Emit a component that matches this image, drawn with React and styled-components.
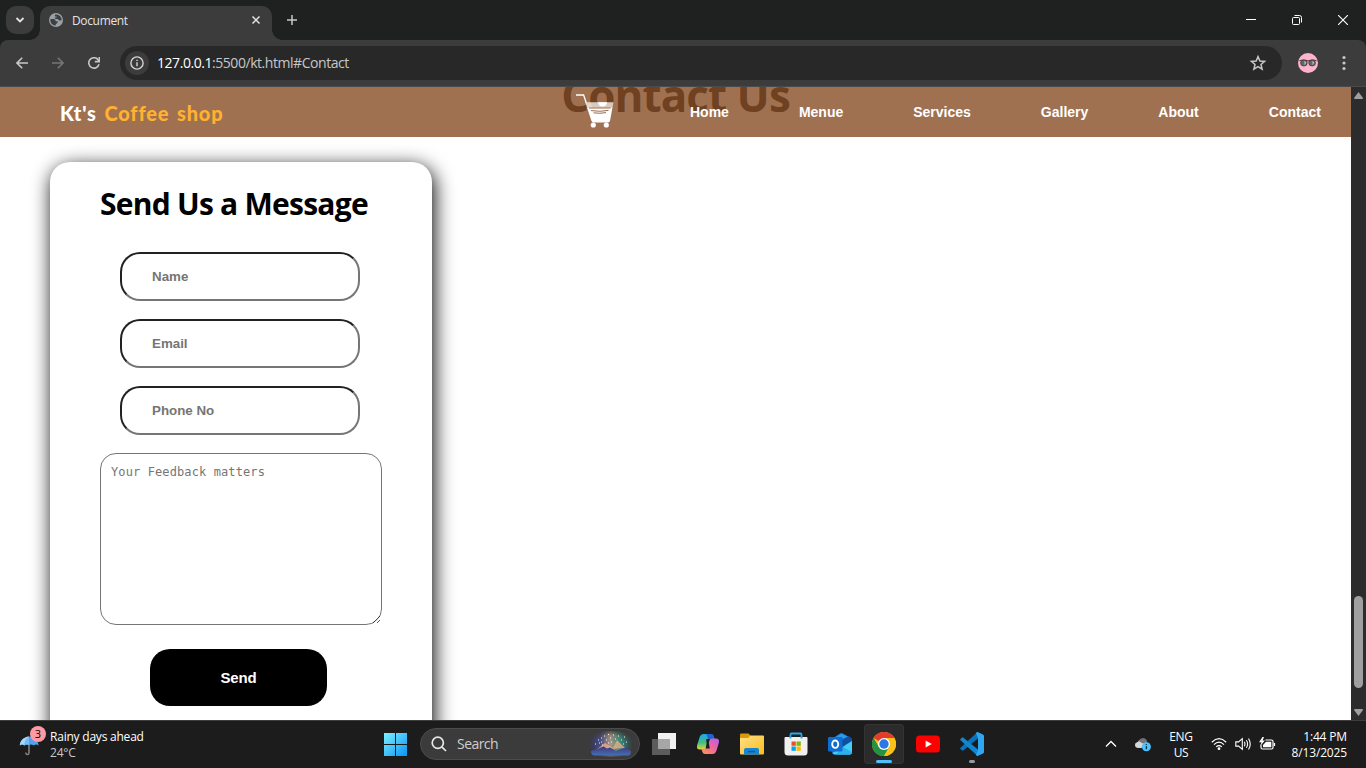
import React from "react";
import styled, { createGlobalStyle } from "styled-components";

const Global = createGlobalStyle`
  *, *::before, *::after { box-sizing: border-box; }
  body { margin: 0; overflow: hidden; background: #1c1c1c; }
  svg { display: block; flex: none; }
`;

const UI = `"Segoe UI", "Open Sans", "Noto Sans", sans-serif`;

const Screen = styled.div`
  width: 1366px;
  height: 768px;
  display: flex;
  flex-direction: column;
  overflow: hidden;
  font-family: ${UI};
`;

/* ---------- browser chrome ---------- */
const TabStrip = styled.div`
  height: 40px;
  flex: none;
  display: flex;
  background: #1f2120;
  color: #e3e3e3;
`;
const TabSearch = styled.div`
  width: 28px;
  height: 28px;
  margin: 6px 6px 0;
  border-radius: 10px;
  background: #3c3c3c;
  display: grid;
  place-items: center;
`;
const Tab = styled.div`
  position: relative;
  width: 232px;
  height: 34px;
  margin-top: 6px;
  padding: 0 11px 6px 9px;
  display: flex;
  align-items: center;
  border-radius: 10px 10px 0 0;
  background: #3c3c3c;
  &::before, &::after {
    content: "";
    position: absolute;
    bottom: 0;
    width: 10px;
    height: 10px;
  }
  &::before { left: -10px; background: radial-gradient(circle at 0 0, transparent 9.5px, #3c3c3c 10px); }
  &::after { right: -10px; background: radial-gradient(circle at 100% 0, transparent 9.5px, #3c3c3c 10px); }
`;
const TabTitle = styled.span`
  flex: 1;
  margin-left: 9px;
  padding-top: 1px;
  font-size: 12px;
  line-height: 16px;
  letter-spacing: -0.35px;
`;
const NewTab = styled.div`
  width: 40px;
  display: grid;
  place-items: center;
`;
const WindowButtons = styled.div`
  margin-left: auto;
  display: flex;
`;
const WindowButton = styled.div`
  width: 46px;
  height: 40px;
  display: grid;
  place-items: center;
`;
const ToolbarBack = styled.div`
  flex: none;
  background: #1f2120;
`;
const Toolbar = styled.div`
  height: 47px;
  display: flex;
  align-items: center;
  padding: 0 10px 1px 10px;
  background: #3c3c3c;
  border-bottom: 1px solid #4a4a4a;
  border-radius: 8px 8px 0 0;
`;
const ToolButton = styled.div`
  width: ${(p) => p.$w || 36}px;
  height: 36px;
  display: grid;
  place-items: center;
`;
const AddressBar = styled.div`
  width: 1162px;
  height: 34px;
  margin-left: 2px;
  padding: 0 15px 0 5px;
  display: flex;
  align-items: center;
  border-radius: 17px;
  background: #282828;
`;
const InfoBadge = styled.div`
  width: 24px;
  height: 24px;
  border-radius: 50%;
  background: #3c3c3c;
  display: grid;
  place-items: center;
`;
const Url = styled.span`
  flex: 1;
  margin-left: 8px;
  font-size: 14px;
  line-height: 20px;
  letter-spacing: -0.45px;
  color: #c7c7c7;
  b { font-weight: 400; color: #fff; }
`;

/* ---------- web page ---------- */
const Viewport = styled.div`
  height: 633px;
  flex: none;
  display: flex;
  background: #fff;
`;
const Page = styled.main`
  position: relative;
  width: 1351px;
  height: 633px;
  overflow: hidden;
`;
const PageHeader = styled.header`
  position: absolute;
  inset: 0 0 auto 0;
  height: 50px;
  padding: 0 30px 0 60px;
  display: flex;
  align-items: center;
  background: rgba(137, 80, 41, 0.81);
  color: #fff;
`;
const Brand = styled.div`
  width: 515px;
  padding-top: 2px;
  font: 900 20px/30px "Comic Sans MS", Lato, sans-serif;
  letter-spacing: 0.8px;
  word-spacing: 2.3px;
  white-space: pre;
  span { color: #ffb130; }
`;
const Nav = styled.nav`
  margin-left: 75px;
  display: flex;
  gap: 70px;
  font: 700 14px/18px Arial, "Liberation Sans", sans-serif;
  a { color: #fff; }
`;
const SectionTitle = styled.h1`
  display: flow-root;
  height: 75px;
  margin: 0;
  text-align: center;
  font-size: 44px;
  line-height: 60px;
  font-weight: 700;
  letter-spacing: -0.95px;
  color: #000;
  span { display: block; margin-top: -22px; height: 60px; }
`;
const FormCard = styled.form`
  width: 382px;
  height: 640px;
  margin-left: 50px;
  padding: 20px 50px;
  display: flex;
  flex-direction: column;
  border-radius: 20px;
  background: #fff;
  box-shadow: 2px 5px 20px #000;
`;
const FormTitle = styled.h2`
  height: 44px;
  margin: 0 0 26px;
  font-size: 30px;
  line-height: 44px;
  font-weight: 700;
  letter-spacing: -0.75px;
  white-space: nowrap;
  color: #000;
`;
const Field = styled.input`
  width: 240px;
  height: 49px;
  margin: 0 0 18px 20px;
  padding: 0 30px;
  border: 2px inset rgb(118, 118, 118);
  border-radius: 20px;
  background: #fff;
  font: 700 13.33px Arial, "Liberation Sans", sans-serif;
  &::placeholder { color: #757575; }
`;
const Feedback = styled.textarea`
  width: 282px;
  height: 172px;
  flex: none;
  padding: 10px;
  border: 1px solid #767676;
  border-radius: 16px;
  background: #fff;
  font: 12px/16px Consolas, "DejaVu Sans Mono", monospace;
  letter-spacing: 0.11px;
  &::placeholder { color: #757575; }
`;
const SendButton = styled.button`
  width: 177px;
  height: 57px;
  margin: 24px 0 0 50px;
  border: 0;
  border-radius: 20px;
  background: #000;
  color: #fff;
  font: 700 15px Arial, "Liberation Sans", sans-serif;
  letter-spacing: -0.2px;
`;
const ScrollBar = styled.div`
  width: 15px;
  display: flex;
  flex-direction: column;
  align-items: center;
  padding: 5px 0 4px;
  background: #2c2c2c;
`;
const Thumb = styled.div`
  width: 9px;
  height: 92px;
  flex: none;
  margin: 497px 0 21px;
  border-radius: 5px;
  background: #9f9f9f;
`;

/* ---------- taskbar ---------- */
const Taskbar = styled.div`
  height: 48px;
  flex: none;
  display: flex;
  align-items: center;
  box-shadow: inset 0 1px #3d3d3d;
  background: #1c1c1c;
  color: #fff;
  font-size: 12px;
  line-height: 16px;
`;
const Weather = styled.div`
  width: 373px;
  padding-left: 19px;
  display: flex;
  align-items: center;
`;
const WeatherIcon = styled.div`
  position: relative;
  width: 31px;
  height: 32px;
  padding-top: 8px;
`;
const Count = styled.span`
  position: absolute;
  left: 11px;
  top: -2px;
  width: 16px;
  height: 16px;
  border-radius: 50%;
  background: #ff99a4;
  color: #000;
  font-size: 11px;
  line-height: 16px;
  text-align: center;
`;
const Lines = styled.div`
  width: ${(p) => (p.$w ? p.$w + "px" : "auto")};
  padding-top: 1px;
  text-align: ${(p) => p.$align || "left"};
  letter-spacing: ${(p) => p.$ls || 0}px;
  white-space: nowrap;
  small { display: block; font-size: 12px; color: ${(p) => p.$sub || "#fff"}; }
`;
const AppTile = styled.div`
  position: relative;
  width: 40px;
  height: 40px;
  margin: 0 2px;
  border-radius: 4px;
  display: grid;
  place-items: center;
  background: ${(p) => (p.$active ? "#2b2b2b" : "none")};
  box-shadow: ${(p) => (p.$active ? "inset 0 0 0 1px #343434" : "none")};
  &::after {
    content: "";
    display: ${(p) => (p.$run ? "block" : "none")};
    position: absolute;
    bottom: 1px;
    left: ${(p) => 20 - p.$run / 2}px;
    width: ${(p) => p.$run}px;
    height: 3px;
    border-radius: 2px;
    background: ${(p) => (p.$active ? "#4cc2ff" : "#9a9a9a")};
  }
`;
const Search = styled.div`
  width: 220px;
  height: 32px;
  margin: 0 2px 0 3px;
  padding: 0 7px 0 10px;
  display: flex;
  align-items: center;
  border: 1px solid #4c4c4c;
  border-radius: 16px;
  background: #3b3b3b;
  color: #cfcfcf;
  font-size: 14px;
  letter-spacing: -0.55px;
  span { flex: 1; margin-left: 10px; }
`;
const Tray = styled.div`
  margin-left: auto;
  padding-right: 19px;
  display: flex;
  align-items: center;
`;
const TraySlot = styled.div`
  width: ${(p) => p.$w}px;
  display: grid;
  place-items: center;
`;

/* ---------- icons ---------- */
const Line = ({ w = 16, h = w, vb, color = "#e3e3e3", sw = 1.6, children }) => (
  <svg width={w} height={h} viewBox={vb || `0 0 ${w} ${h}`} fill="none" stroke={color} strokeWidth={sw}>
    {children}
  </svg>
);

const Globe = () => (
  <svg width="14" height="14" viewBox="0 0 14 14">
    <circle cx="7" cy="7" r="7" fill="#9aa0a6" />
    <path d="M1.500 6 H4.600 Q6.800 6.200 6.800 8.200 H8.600 V9.600 Q8.400 10.800 6.800 10.800 V12.500 Q2.200 12.300 1.400 8Z" fill="#3c4043" />
    <path d="M6.300 1.500 Q10.500 1 12.300 5 Q13 7 12.200 7.500 H10.600 Q9.200 7.300 9 6 H6.500 Q5.600 5.500 5.700 4.600 H7.600 V3.400 H5.900 Q5.600 2 6.300 1.500Z" fill="#3c4043" />
  </svg>
);

const Avatar = () => (
  <svg width="20" height="20" viewBox="0 0 20 20">
    <circle cx="10" cy="10" r="10" fill="#ffb3cc" />
    <path d="M1.500 7.800 Q5.500 6 10 8 Q14.500 6 18.500 7.800" fill="none" stroke="#5d3440" strokeWidth="1.100" />
    <ellipse cx="5.900" cy="10" rx="3.300" ry="3" fill="#5b6b6b" stroke="#49363c" strokeWidth=".8" />
    <ellipse cx="14.100" cy="10" rx="3.300" ry="3" fill="#5b6b6b" stroke="#49363c" strokeWidth=".8" />
    <path d="M6.500 7.800 L8.300 9.600 L6.500 12.300 Z M14.500 7.800 L16.300 9.600 L14.500 12.300 Z" fill="#b4c8c8" />
  </svg>
);

const Cart = () => (
  <svg width="40" height="37" viewBox="0 0 40 37">
    <path d="M1 1 H8.600 L11.300 9" fill="none" stroke="#fff" strokeWidth="1.300" />
    <path d="M10.300 8.200 H38.500 L37.500 13.200 H12Z" fill="#fff" opacity=".72" />
    <path d="M23.200 8.200 H32.200 Q31.600 12.400 27.700 12.400 Q23.800 12.400 23.200 8.200Z" fill="#fff" />
    <path d="M10.300 8.200 L12 13.200 H37.500 L35.200 26 Q34.800 28.500 33 28.500 H18.500 Q16.800 28.500 16.300 26.500 L10.200 8Z" fill="#fff" />
    <path d="M14 14 H35.500 M16 16.600 Q25 18 33.500 16.400 M18.500 18.800 Q25 19.800 31 18.600" fill="none" stroke="#8e5a38" strokeWidth=".9" />
    <circle cx="18.300" cy="31" r="2.600" fill="#fff" />
    <circle cx="31.300" cy="31" r="2.600" fill="#fff" />
  </svg>
);

const Umbrella = () => (
  <svg width="21" height="20" viewBox="0 0 21 20">
    <path d="M10 8 V16.500 Q10 18.600 8.200 18.500 Q6.800 18.400 6.800 16.500" fill="none" stroke="#858585" strokeWidth="1.500" />
    <path d="M.8 9.400 C1.200 4 4.800 1 10 .4 C15.400 1 19 4 19.600 9.400 Q17 7.800 14.600 9.400 Q12.400 7.600 10 9 Q7.600 7.600 5.400 9.400 Q3 7.800 .8 9.400Z" fill="#4fa3ee" />
    <path d="M.8 9.400 C1.200 4 4.800 1 10 .4 Q5.600 4 5.400 9.400 Q3 7.800 .8 9.400Z" fill="#a7d6fb" />
    <path d="M10 .4 Q5.600 4 5.400 9.400 Q7.600 7.600 10 9Z" fill="#77bbf5" />
  </svg>
);

const WindowsLogo = () => (
  <svg width="23" height="23" viewBox="0 0 23 23">
    <defs>
      <linearGradient id="win" x1="0" y1="0" x2="23" y2="23" gradientUnits="userSpaceOnUse">
        <stop stopColor="#7cf0ff" />
        <stop offset="1" stopColor="#0a93f5" />
      </linearGradient>
    </defs>
    <path d="M0 0h11v11H0z M12 0h11v11h-11z M0 12h11v11H0z M12 12h11v11h-11z" fill="url(#win)" />
  </svg>
);

const SearchArt = () => (
  <svg width="42" height="26" viewBox="0 0 42 26">
    <defs>
      <linearGradient id="sky">
        <stop stopColor="#353a80" />
        <stop offset=".25" stopColor="#4a5090" />
        <stop offset=".48" stopColor="#b09a86" />
        <stop offset=".72" stopColor="#3a9483" />
        <stop offset="1" stopColor="#2b5660" />
      </linearGradient>
      <radialGradient id="glow" cx=".5" cy=".5" r=".55">
        <stop stopColor="#fff" />
        <stop offset=".6" stopColor="#fff" stopOpacity=".8" />
        <stop offset="1" stopColor="#fff" stopOpacity="0" />
      </radialGradient>
      <linearGradient id="hill" x2="0" y2="1">
        <stop stopColor="#43357c" />
        <stop offset="1" stopColor="#4370b4" />
      </linearGradient>
      <mask id="fade"><rect width="42" height="26" fill="url(#glow)" /></mask>
    </defs>
    <rect width="42" height="26" fill="url(#sky)" mask="url(#fade)" />
    <path d="M6 19 L15 12 L23 17 L27 9 L35 17Z" fill="#efb08a" opacity=".75" />
    <path d="M1 20 Q8 18 13.500 15.500 L17 17.500 L20 16.500 L26 20 L36 16.500 L41 20 Q41 24 38.500 24.500 H4 Q1 24 1 20Z" fill="url(#hill)" />
    <path d="M5 13h1 M8 9h1 M11 11h1 M14 5h1 M16 9h1 M18 3.500h1 M20 7h1 M23 4h1 M25 8h1 M28 5h1 M31 9h1 M34 6h1 M36 11h1 M12 14h1 M9 12h1 M21 11h1 M33 13h1 M11 7h1 M18 12h1" stroke="#fff6da" strokeWidth="1" />
  </svg>
);

const TaskView = () => (
  <svg width="24" height="22" viewBox="0 0 24 22">
    <path d="M6 0h18v16H6z" fill="#f1f1f1" />
    <path d="M0 6h18v16H0z" fill="#5c5c5c" />
    <path d="M6 6h12v10H6z" fill="#a6a6a6" />
  </svg>
);

const Copilot = () => (
  <svg width="24" height="22" viewBox="0 0 24 22">
    <defs>
      <linearGradient id="cpA" x1="0" y1="0" x2="0" y2="1">
        <stop stopColor="#1ea5e8" />
        <stop offset=".55" stopColor="#3fbf85" />
        <stop offset="1" stopColor="#e8d13c" />
      </linearGradient>
      <linearGradient id="cpB" x1="1" y1="0" x2="0" y2="1">
        <stop stopColor="#b160ee" />
        <stop offset=".5" stopColor="#f0679a" />
        <stop offset="1" stopColor="#ff9a4c" />
      </linearGradient>
    </defs>
    <path d="M7.500 1 H15 Q17 1 17.600 3 L18.500 6 H16 Q13.700 6 13 8.500 L11.200 14 Q10.300 16.500 8 16.500 H4 Q0 16.500 1.200 12 L3.500 4.500 Q4.600 1 7.500 1Z" fill="url(#cpA)" />
    <path d="M10 1 H15 Q17 1 17.600 3 L18.500 6 H16 Q13.700 6 13 8.500 L12.600 10 L11.500 4 Q11 1.500 10 1Z" fill="#2260d2" />
    <path d="M16.500 21 H9 Q7 21 6.400 19 L5.500 16 H8 Q10.300 16 11 13.500 L12.800 8 Q13.700 5.500 16 5.500 H20 Q24 5.500 22.800 10 L20.500 17.500 Q19.400 21 16.500 21Z" fill="url(#cpB)" />
    <path d="M10.200 6 H13.700 L12.800 10 L13.800 15.500 H9.600 L10.600 10.500Z" fill="#1c1c1c" />
  </svg>
);

const Folder = () => (
  <svg width="24" height="22" viewBox="0 0 24 22">
    <defs>
      <linearGradient id="fold" x2="1" y2="1">
        <stop stopColor="#ffe086" />
        <stop offset="1" stopColor="#f9bd1e" />
      </linearGradient>
    </defs>
    <path d="M0 1.500 Q0 .5 1 .5 H8.500 L11 3 L9 6 H0Z" fill="#d99a07" />
    <path d="M0 5 H8 L10.500 2.500 H23 Q24 2.500 24 3.500 V20.500 Q24 21.500 23 21.500 H1 Q0 21.500 0 20.500Z" fill="url(#fold)" />
    <path d="M4 21.500 V17 Q4 15 6 15 H17 Q19 15 19 17 V21.500Z" fill="#1583d6" />
    <path d="M8 18.600 H15" stroke="#075a9e" strokeWidth="1.300" />
  </svg>
);

const Store = () => (
  <svg width="24" height="24" viewBox="0 0 24 24">
    <path d="M.5 6 Q.5 5 1.500 5 H22.500 Q23.500 5 23.500 6 V20 Q23.500 23.500 20 23.500 H4 Q.5 23.500 .5 20Z" fill="#f0f0f0" />
    <path d="M6.500 6.500 V2.500 Q6.500 1.500 7.500 1.500 H16.500 Q17.500 1.500 17.500 2.500 V6.500" fill="none" stroke="#27a7ec" strokeWidth="1.800" />
    <path d="M7.500 9.500h4.300v4.300H7.500z" fill="#f25022" />
    <path d="M12.500 9.500h4.300v4.300h-4.300z" fill="#7fba00" />
    <path d="M7.500 14.500h4.300v4.300H7.500z" fill="#00a4ef" />
    <path d="M12.500 14.500h4.300v4.300h-4.300z" fill="#ffb900" />
  </svg>
);

const Outlook = () => (
  <svg width="24" height="24" viewBox="0 0 24 24">
    <path d="M3.500 7 L12 1.500 Q13.500 .6 15 1.500 L24 7 V20 Q24 22.500 21.500 22.500 H8 Q4 22.500 3.500 19Z" fill="#1a76d2" />
    <path d="M8 5 L13 1.700 L20 4.500 L14 9Z" fill="#2b9bea" />
    <path d="M24 7.500 V20 Q24 22.500 21.500 22.500 H7 Q5 22.500 4.500 21 L15 15Z" fill="#45cdf5" />
    <path d="M15 15 L24 20 Q24 22.500 21.500 22.500 H8Z" fill="#2bb0ea" />
    <path d="M13 8 L21 4 L24 7 L24 9 L14 15Z" fill="#0f50a2" />
    <rect x="0" y="5" width="14.500" height="14.500" rx="1.300" fill="#0f6cd0" />
    <ellipse cx="7.200" cy="12.200" rx="3" ry="3.700" fill="none" stroke="#fff" strokeWidth="1.900" />
  </svg>
);

const Chrome = () => (
  <svg width="24" height="24" viewBox="0 0 24 24">
    <circle cx="12" cy="12" r="12" fill="#fbc116" />
    <path d="M12 12 L1.600 6 A12 12 0 0 1 22.400 6 Z" fill="#e33b2e" />
    <path d="M1.600 6 A12 12 0 0 0 12 24 L17.200 15 L12 12 L6.800 15Z" fill="#229342" />
    <path d="M12 6 H22.400 A12 12 0 0 1 12 24 L17.200 15Z" fill="#fbc116" />
    <circle cx="12" cy="12" r="6" fill="#fff" />
    <circle cx="12" cy="12" r="4.700" fill="#2a78e8" />
  </svg>
);

const YouTube = () => (
  <svg width="24" height="18" viewBox="0 0 24 18">
    <rect y=".5" width="24" height="17" rx="3.500" fill="#f00" />
    <path d="M9.600 5.500 L15.800 9 L9.600 12.500Z" fill="#fff" />
  </svg>
);

const VSCode = () => (
  <svg width="24" height="24" viewBox="0 0 24 24">
    <path d="M17.500 0 L18 6.500 L3.200 18.400 Q2.500 19 1.800 18.300 L.5 17.100 Q-.2 16.400 .5 15.700Z" fill="#0b72ba" />
    <path d="M.5 8.300 Q-.2 7.600 .5 6.900 L1.800 5.700 Q2.500 5 3.200 5.600 L18 17.500 L17.500 24Z" fill="#0f86cf" />
    <path d="M17.500 0 L23 2.500 Q24 3 24 4 V20 Q24 21 23 21.500 L17.500 24 Q16.500 24 16 23 L18 17.500 V6.500 L16 1 Q16.500 0 17.500 0Z" fill="#2fa7f0" />
  </svg>
);

const CloudInfo = () => (
  <svg width="18" height="16" viewBox="0 0 18 16">
    <path d="M4.500 12 Q1 12 1 9 Q1 6.500 3.800 6 Q5.500 3 9 3 L12 6 L7.500 12Z" fill="#d6d6d6" />
    <path d="M4.500 5 Q7 1.500 10 2.200 Q13 3 13.300 6.500 L9 7.500Z" fill="#747474" />
    <circle cx="12.400" cy="10.700" r="4.500" fill="#4cc2ff" />
    <path d="M12.400 10 V13.200 M12.400 7.900 V9.100" stroke="#073a57" strokeWidth="1.300" />
  </svg>
);

const Wifi = () => (
  <Line w={16} h={14} color="#fff" sw={1.200}>
    <path d="M.8 5.200 Q8 -1.800 15.200 5.200 M3 7.600 Q8 2.800 13 7.600 M5.200 9.900 Q8 7.400 10.800 9.900" />
    <circle cx="8" cy="11.700" r="1.400" fill="#fff" stroke="none" />
  </Line>
);

const Volume = () => (
  <Line w={17} h={14} color="#fff" sw={1.100}>
    <path d="M.8 4.900 H3.600 L7.300 1.700 V12.300 L3.600 9.100 H.8Z M9.300 4.800 Q10.600 7 9.300 9.200 M11.400 3.200 Q13.800 7 11.400 10.800 M13.500 1.500 Q17 7 13.500 12.500" />
  </Line>
);

const Battery = () => (
  <Line w={17} h={14} color="#fff" sw={1.200}>
    <path d="M6.500 3 H12.500 Q14 3 14 4.500 V10.500 Q14 12 12.500 12 H3.500 Q2 12 2 10.500 V7.500 M15.500 6 V9" />
    <path d="M4 10.300 V8 L7 4.700 H12.300 V10.300Z" fill="#fff" stroke="none" />
    <path d="M3.500 0 L0 5.200 H2.500 L1.500 8.500 L6 3.600 H3.600 L5 0Z" fill="#fff" stroke="none" />
  </Line>
);

const NAV = ["Home", "Menue", "Services", "Gallery", "About", "Contact"];

export default function App() {
  return (
    <Screen>
      <Global />
      <TabStrip>
        <TabSearch>
          <Line w={10} h={8} sw={1.800}><path d="M1.500 2 L5 5.500 L8.500 2" /></Line>
        </TabSearch>
        <Tab>
          <Globe />
          <TabTitle>Document</TabTitle>
          <Line w={10} sw={1.500}><path d="M1.500 1.500 L8.500 8.500 M8.500 1.500 L1.500 8.500" /></Line>
        </Tab>
        <NewTab>
          <Line w={12} color="#c7c7c7" sw={1.500}><path d="M6 1 V11 M1 6 H11" /></Line>
        </NewTab>
        <WindowButtons>
          <WindowButton><Line w={10} color="#fff" sw={1}><path d="M0 4.500 H10" /></Line></WindowButton>
          <WindowButton>
            <Line w={10} color="#fff" sw={1}>
              <rect x=".5" y="2.500" width="7" height="7" rx="1" />
              <path d="M2.500 .5 H7.500 Q9.500 .5 9.500 2.500 V7.500" />
            </Line>
          </WindowButton>
          <WindowButton><Line w={10} color="#fff" sw={1.100}><path d="M0 0 L10 10 M10 0 L0 10" /></Line></WindowButton>
        </WindowButtons>
      </TabStrip>
      <ToolbarBack>
        <Toolbar>
          <ToolButton $w={24}>
            <Line w={12} color="#c7c7c7"><path d="M12 6 H1.200 M6.200 .8 L1 6 L6.200 11.200" /></Line>
          </ToolButton>
          <ToolButton $w={48}>
            <Line w={12} color="#757575"><path d="M0 6 H10.800 M5.800 .8 L11 6 L5.800 11.200" /></Line>
          </ToolButton>
          <ToolButton $w={24}>
            <Line w={12} color="#c7c7c7">
              <path d="M11 7.300 A5.200 5.200 0 1 1 9.800 2.400 L11 4" />
              <path d="M11.300 0 V4.600 H6.800" />
            </Line>
          </ToolButton>
          <ToolButton $w={12} />
          <AddressBar>
            <InfoBadge>
              <Line w={14} color="#d5d5d5" sw={1.400}>
                <circle cx="7" cy="7" r="6.100" />
                <path d="M7 6.200 V10.200 M7 3.700 V5.100" />
              </Line>
            </InfoBadge>
            <Url><b>127.0.0.1</b>:5500/kt.html#Contact</Url>
            <Line w={18} color="#c7c7c7" sw={1.500}>
              <path d="M9 2.600 L10.900 7 L15.600 7.400 L12 10.500 L13.100 15.200 L9 12.700 L4.900 15.200 L6 10.500 L2.400 7.400 L7.100 7Z" />
            </Line>
          </AddressBar>
          <ToolButton $w={52}><Avatar /></ToolButton>
          <ToolButton $w={20}>
            <svg width="4" height="16" viewBox="0 0 4 16" fill="#c7c7c7">
              <circle cx="2" cy="2.500" r="1.600" />
              <circle cx="2" cy="8" r="1.600" />
              <circle cx="2" cy="13.500" r="1.600" />
            </svg>
          </ToolButton>
        </Toolbar>
      </ToolbarBack>

      <Viewport>
        <Page>
          <SectionTitle><span>Contact Us</span></SectionTitle>
          <FormCard>
            <FormTitle>Send Us a Message</FormTitle>
            <Field placeholder="Name" />
            <Field placeholder="Email" />
            <Field placeholder="Phone No" />
            <Feedback placeholder="Your Feedback matters" />
            <SendButton type="button">Send</SendButton>
          </FormCard>
          <PageHeader>
            <Brand>Kt's <span>Coffee shop</span></Brand>
            <Cart />
            <Nav>{NAV.map((n) => <a key={n}>{n}</a>)}</Nav>
          </PageHeader>
        </Page>
        <ScrollBar>
          <svg width="9" height="7" viewBox="0 0 9 7"><path d="M4.500 0 L9 6 Q9 7 8 7 H1 Q0 7 0 6Z" fill="#9f9f9f" /></svg>
          <Thumb />
          <svg width="9" height="7" viewBox="0 0 9 7"><path d="M4.500 7 L9 1 Q9 0 8 0 H1 Q0 0 0 1Z" fill="#9f9f9f" /></svg>
        </ScrollBar>
      </Viewport>

      <Taskbar>
        <Weather>
          <WeatherIcon><Umbrella /><Count>3</Count></WeatherIcon>
          <Lines $ls={-0.22} $sub="#c8c8c8">Rainy days ahead<small>24°C</small></Lines>
        </Weather>
        <AppTile><WindowsLogo /></AppTile>
        <Search>
          <Line w={16} color="#e6e6e6" sw={1.700}><circle cx="6.800" cy="6.800" r="5.600" /><path d="M10.800 10.800 L15 15" /></Line>
          <span>Search</span>
          <SearchArt />
        </Search>
        <AppTile><TaskView /></AppTile>
        <AppTile><Copilot /></AppTile>
        <AppTile><Folder /></AppTile>
        <AppTile><Store /></AppTile>
        <AppTile><Outlook /></AppTile>
        <AppTile $active $run={16}><Chrome /></AppTile>
        <AppTile><YouTube /></AppTile>
        <AppTile $run={6}><VSCode /></AppTile>
        <Tray>
          <TraySlot $w={32}><Line w={12} h={8} color="#fff" sw={1.300}><path d="M1 6.500 L6 1.500 L11 6.500" /></Line></TraySlot>
          <TraySlot $w={32}><CloudInfo /></TraySlot>
          <Lines $w={44} $align="center" $ls={-0.3}>ENG<small>US</small></Lines>
          <TraySlot $w={32}><Wifi /></TraySlot>
          <TraySlot $w={16}><Volume /></TraySlot>
          <TraySlot $w={32}><Battery /></TraySlot>
          <Lines $w={64} $align="right" $ls={-0.15}>1:44 PM<small>8/13/2025</small></Lines>
        </Tray>
      </Taskbar>
    </Screen>
  );
}
